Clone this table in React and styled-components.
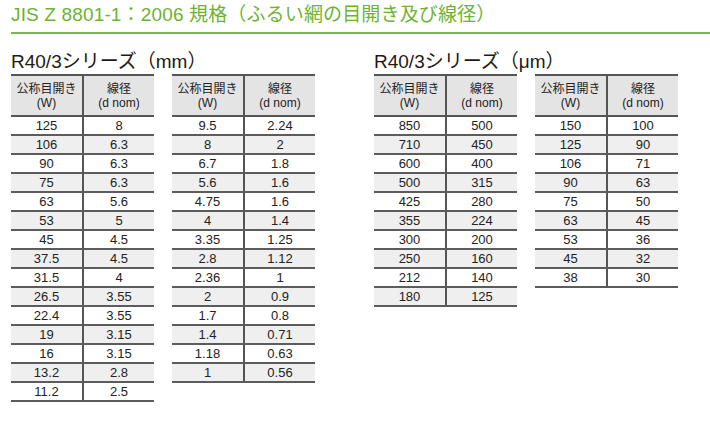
import React from "react";
import styled, { createGlobalStyle } from "styled-components";

const mmLeft = [
  ["125", "8"], ["106", "6.3"], ["90", "6.3"], ["75", "6.3"], ["63", "5.6"],
  ["53", "5"], ["45", "4.5"], ["37.5", "4.5"], ["31.5", "4"], ["26.5", "3.55"],
  ["22.4", "3.55"], ["19", "3.15"], ["16", "3.15"], ["13.2", "2.8"], ["11.2", "2.5"],
];
const mmRight = [
  ["9.5", "2.24"], ["8", "2"], ["6.7", "1.8"], ["5.6", "1.6"], ["4.75", "1.6"],
  ["4", "1.4"], ["3.35", "1.25"], ["2.8", "1.12"], ["2.36", "1"], ["2", "0.9"],
  ["1.7", "0.8"], ["1.4", "0.71"], ["1.18", "0.63"], ["1", "0.56"],
];
const umLeft = [
  ["850", "500"], ["710", "450"], ["600", "400"], ["500", "315"], ["425", "280"],
  ["355", "224"], ["300", "200"], ["250", "160"], ["212", "140"], ["180", "125"],
];
const umRight = [
  ["150", "100"], ["125", "90"], ["106", "71"], ["90", "63"], ["75", "50"],
  ["63", "45"], ["53", "36"], ["45", "32"], ["38", "30"],
];

const GlobalStyle = createGlobalStyle`
  body {
    margin: 0;
    background: #fff;
    font-family: "Liberation Sans", "Noto Sans CJK JP", sans-serif;
  }
`;

const Page = styled.div`
  width: 710px;
  height: 421px;
  padding-left: 11px;
  box-sizing: border-box;
  overflow: hidden;
`;

const Title = styled.h1`
  margin: 0;
  padding-top: 4px;
  height: 29px;
  box-sizing: border-box;
  font-family: "Liberation Sans", "Noto Sans CJK JP", sans-serif;
  font-weight: 400;
  font-size: 19px;
  line-height: 22px;
  letter-spacing: 0.15px;
  color: #6cb332;
  white-space: nowrap;
`;

const Rule = styled.div`
  height: 2px;
  background: #7cb93a;
  margin-top: 3px;
`;

const Sections = styled.div`
  display: flex;
`;

const Section = styled.div`
  width: ${(p) => p.$width}px;
`;

const Subtitle = styled.h2`
  margin: 17px 0 0;
  height: 21px;
  font-family: "Liberation Sans", "Noto Sans CJK JP", sans-serif;
  font-weight: 400;
  font-size: 19px;
  line-height: 21px;
  color: #231815;
  white-space: nowrap;
`;

const Tables = styled.div`
  display: flex;
  align-items: flex-start;
  gap: 18px;
  margin-top: 2px;
`;

const Table = styled.table`
  width: 143px;
  border-collapse: collapse;
  table-layout: fixed;
  border-top: 2px solid #555;
  font-family: "Liberation Sans", "Noto Sans CJK JP", sans-serif;
  color: #222;
`;

const Head = styled.th`
  height: 39px;
  padding: 0;
  background: #e4e4e4;
  border-bottom: 2px solid #555;
  border-left: ${(p) => (p.$divider ? "2px solid #555" : "none")};
  font-weight: 400;
  font-size: 12px;
  line-height: 14px;
  text-align: center;
  vertical-align: middle;
`;

const Row = styled.tr`
  background: ${(p) => (p.$shade ? "#efefef" : "#fff")};
`;

const Cell = styled.td`
  height: 17px;
  padding: 0;
  border-bottom: 2px solid #5c5c5c;
  border-left: ${(p) => (p.$divider ? "2px solid #555" : "none")};
  font-size: 13px;
  line-height: 17px;
  text-align: center;
`;

function DataTable({ rows }) {
  return (
    <Table>
      <colgroup>
        <col style={{ width: 72 }} />
        <col style={{ width: 71 }} />
      </colgroup>
      <thead>
        <tr>
          <Head>
            公称目開き
            <br />
            (W)
          </Head>
          <Head $divider>
            線径
            <br />
            (d nom)
          </Head>
        </tr>
      </thead>
      <tbody>
        {rows.map(([w, d], i) => (
          <Row key={i} $shade={i % 2 === 1}>
            <Cell>{w}</Cell>
            <Cell $divider>{d}</Cell>
          </Row>
        ))}
      </tbody>
    </Table>
  );
}

export default function App() {
  return (
    <Page>
      <GlobalStyle />
      <Title>JIS Z 8801-1：2006 規格（ふるい網の目開き及び線径）</Title>
      <Rule />
      <Sections>
        <Section $width={363}>
          <Subtitle>R40/3シリーズ（mm）</Subtitle>
          <Tables>
            <DataTable rows={mmLeft} />
            <DataTable rows={mmRight} />
          </Tables>
        </Section>
        <Section $width={320}>
          <Subtitle>R40/3シリーズ（μm）</Subtitle>
          <Tables>
            <DataTable rows={umLeft} />
            <DataTable rows={umRight} />
          </Tables>
        </Section>
      </Sections>
    </Page>
  );
}
